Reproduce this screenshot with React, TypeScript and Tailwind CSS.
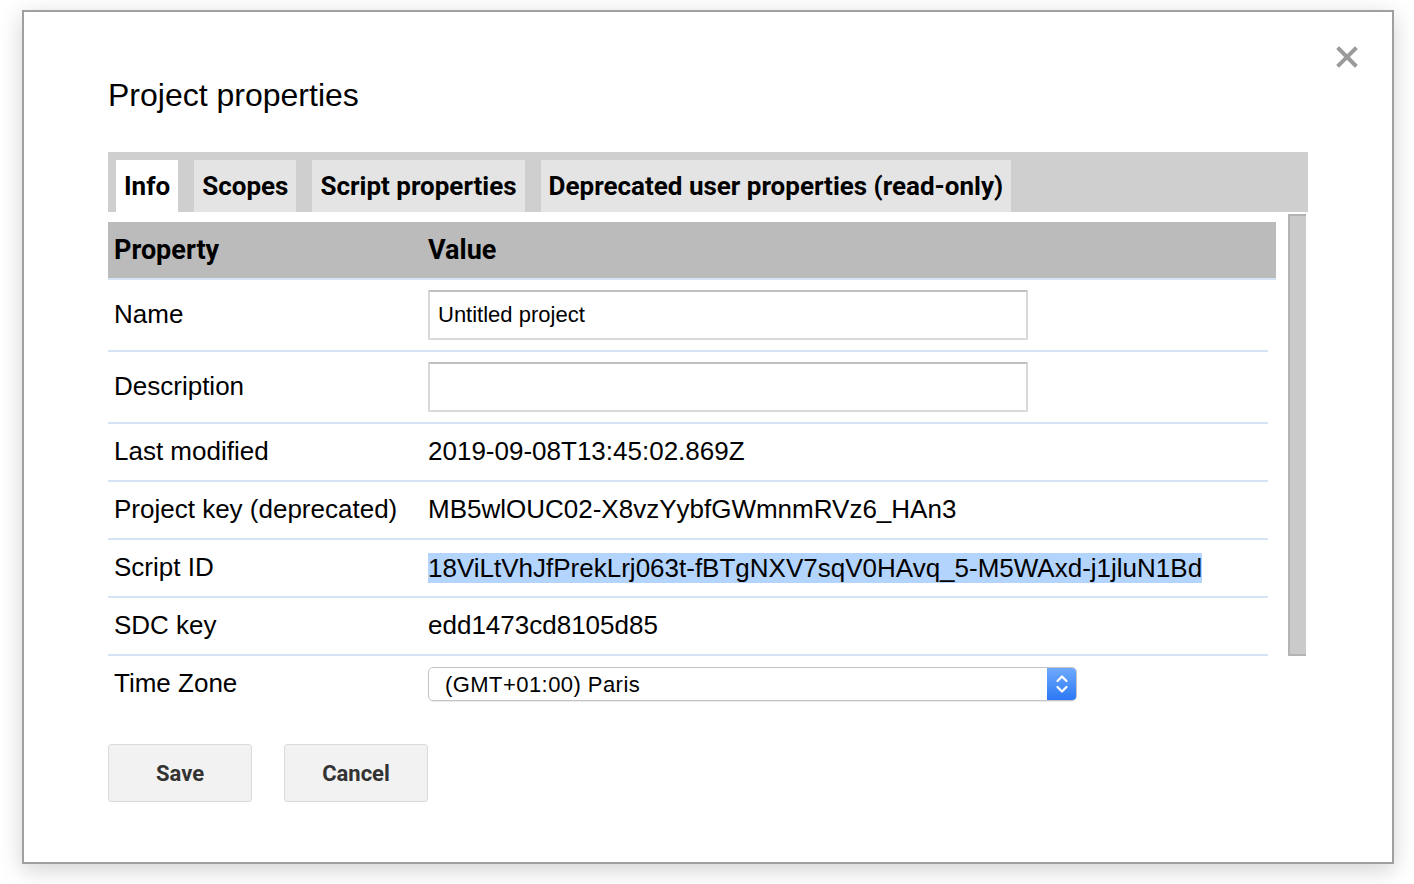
import React from "react";

const rows = [
  { label: "Last modified", value: "2019-09-08T13:45:02.869Z" },
  { label: "Project key (deprecated)", value: "MB5wlOUC02-X8vzYybfGWmnmRVz6_HAn3" },
];

const label = "pl-[6px] pb-[2px] w-[320px] shrink-0 text-[26px] text-black";
const sep = "flex items-center w-[1160px] border-b-2 border-[#d6e3f4]";

function CloseIcon() {
  return (
    <svg width="22" height="22" viewBox="0 0 22 22" className="block">
      <path d="M3 3 L19 19 M19 3 L3 19" stroke="#9b9b9b" strokeWidth="4" strokeLinecap="square" />
    </svg>
  );
}

function Chevrons() {
  return (
    <svg width="14" height="24" viewBox="0 0 14 24" className="block">
      <path d="M2.5 9 L7 4.5 L11.5 9 M2.5 15 L7 19.5 L11.5 15" fill="none" stroke="white" strokeWidth="2.2" strokeLinecap="round" strokeLinejoin="round" />
    </svg>
  );
}

export default function App() {
  return (
    <div className="w-[1414px] h-[884px] bg-white overflow-hidden pt-[10px] pl-[22px] font-['Liberation_Sans',Arial,sans-serif]">
      <div className="relative w-[1372px] h-[854px] bg-white border-2 border-[#a0a0a0] shadow-[0_6px_22px_rgba(0,0,0,0.18)] pl-[84px] pt-[67px]">
        <button className="absolute top-[34px] right-[34px]">
          <CloseIcon />
        </button>

        <h1 className="text-[32px] leading-[32px] text-black">Project properties</h1>

        {/* tabs */}
        <div className="mt-[41px] w-[1200px] h-[60px] bg-[#cfcfcf] pl-[8px] pt-[8px] flex gap-[16px] font-['Roboto',sans-serif] font-bold text-[26px] text-black">
          <div className="h-[52px] px-[8px] bg-white flex items-center">Info</div>
          <div className="h-[52px] px-[8px] bg-[#e4e4e4] flex items-center">Scopes</div>
          <div className="h-[52px] px-[8px] bg-[#e4e4e4] flex items-center">Script properties</div>
          <div className="h-[52px] px-[8px] bg-[#e4e4e4] flex items-center">Deprecated user properties (read-only)</div>
        </div>

        <div className="flex">
          <div className="w-[1168px] pt-[10px]">
            <div className="flex items-center h-[58px] bg-[#bbbbbb] border-b-2 border-[#d6e3f4] font-['Roboto',sans-serif] font-bold text-[27px] text-black">
              <div className="pl-[6px] w-[320px]">Property</div>
              <div>Value</div>
            </div>

            <div className={`${sep} h-[72px]`}>
              <div className={label}>Name</div>
              <div className="w-[600px] h-[50px] border-2 border-[#d9d9d9] border-t-[#bfbfbf] pl-[8px] pb-[2px] flex items-center text-[22px] text-black">
                Untitled project
              </div>
            </div>

            <div className={`${sep} h-[72px]`}>
              <div className={label}>Description</div>
              <div className="w-[600px] h-[50px] border-2 border-[#d9d9d9] border-t-[#bfbfbf]"></div>
            </div>

            {rows.map((r) => (
              <div key={r.label} className={`${sep} h-[58px]`}>
                <div className={label}>{r.label}</div>
                <div className="pb-[2px] text-[26px] text-black">{r.value}</div>
              </div>
            ))}

            <div className={`${sep} h-[58px]`}>
              <div className={label}>Script ID</div>
              <div className="text-[26px] leading-[30px] text-black bg-[#b3d4fd]">
                18ViLtVhJfPrekLrj063t-fBTgNXV7sqV0HAvq_5-M5WAxd-j1jluN1Bd
              </div>
            </div>

            <div className={`${sep} h-[58px]`}>
              <div className={label}>SDC key</div>
              <div className="pb-[2px] text-[26px] text-black">edd1473cd8105d85</div>
            </div>

            <div className="flex items-center w-[1160px] h-[56px]">
              <div className={label}>Time Zone</div>
              <div className="w-[649px] h-[34px] rounded-[5px] border border-[#c4c4c4] flex items-stretch overflow-hidden shadow-[0_1px_1px_rgba(0,0,0,0.08)]">
                <div className="flex-1 pl-[16px] flex items-center text-[22px] tracking-[0.02em] text-black">
                  (GMT+01:00) Paris
                </div>
                <div className="w-[29px] bg-gradient-to-b from-[#6ea9fb] to-[#2a78f5] flex items-center justify-center">
                  <Chevrons />
                </div>
              </div>
            </div>
          </div>

          <div className="ml-[12px] mt-[2px] w-[18px] h-[442px] bg-[#cacaca] border-l-2 border-t-2 border-b-2 border-[#b3b3b3]"></div>
        </div>

        <div className="mt-[32px] flex gap-[32px] font-['Roboto',sans-serif] font-bold text-[22px] text-[#333]">
          <button className="w-[144px] h-[58px] bg-[#f2f2f2] border border-[#dadada] rounded-[3px]">Save</button>
          <button className="w-[144px] h-[58px] bg-[#f2f2f2] border border-[#dadada] rounded-[3px]">Cancel</button>
        </div>
      </div>
    </div>
  );
}
